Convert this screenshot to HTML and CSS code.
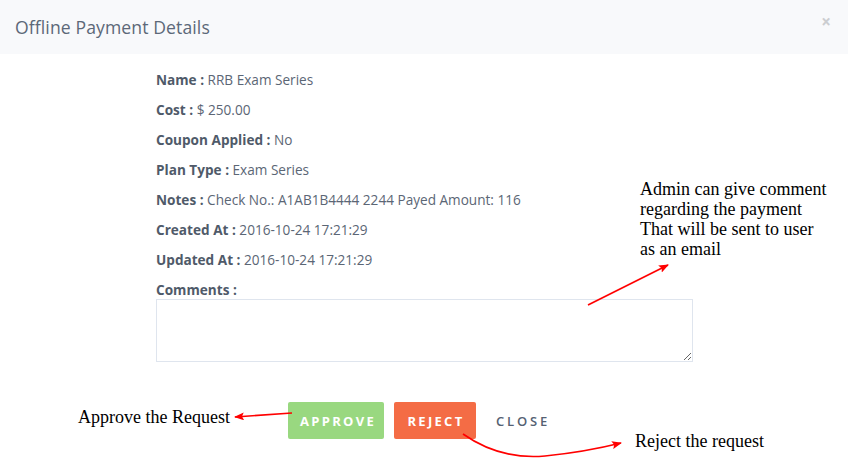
FILE: index.html
```html
<!DOCTYPE html>
<html>
<head>
<meta charset="utf-8">
<link rel="stylesheet" href="styles.css">
</head>
<body>
<div class="modal">
  <div class="modal-header">
    <h4 class="modal-title">Offline Payment Details</h4>
    <span class="close">&times;</span>
  </div>
  <div class="modal-body">
    <div class="details">
      <p class="row"><b>Name :</b> RRB Exam Series</p>
      <p class="row"><b>Cost :</b> $ 250.00</p>
      <p class="row"><b>Coupon Applied :</b> No</p>
      <p class="row"><b>Plan Type :</b> Exam Series</p>
      <p class="row"><b>Notes :</b> Check No.: A1AB1B4444 2244 Payed Amount: 116</p>
      <p class="row"><b>Created At :</b> 2016-10-24 17:21:29</p>
      <p class="row"><b>Updated At :</b> 2016-10-24 17:21:29</p>
      <p class="row"><b>Comments :</b></p>
      <textarea class="comments"></textarea>
    </div>
  </div>
  <div class="modal-footer">
    <button class="btn btn-approve">APPROVE</button>
    <button class="btn btn-reject">REJECT</button>
    <button class="btn btn-close">CLOSE</button>
  </div>

  <div class="note note-admin">Admin can give comment<br>regarding the payment<br>That will be sent to user<br>as an email</div>
  <div class="note note-approve">Approve the Request</div>
  <div class="note note-reject">Reject the request</div>

  <svg class="arrows" width="848" height="473" viewBox="0 0 848 473">
    <defs>
      <marker id="ah" markerWidth="10" markerHeight="8" refX="9" refY="4" orient="auto" markerUnits="userSpaceOnUse">
        <path d="M0,0 L10,4 L0,8 L2,4 Z" fill="#ff0000"/>
      </marker>
    </defs>
    <path d="M588,305 L668,265" stroke="#ff0000" stroke-width="1.6" fill="none" marker-end="url(#ah)"/>
    <path d="M292,413 L235,417" stroke="#ff0000" stroke-width="1.6" fill="none" marker-end="url(#ah)"/>
    <path d="M463,434 Q500,460 545,456 Q585,452 621,443" stroke="#ff0000" stroke-width="1.6" fill="none" marker-end="url(#ah)"/>
  </svg>
</div>
</body>
</html>
```
FILE: styles.css
```css
* { box-sizing: border-box; }
html, body { margin: 0; padding: 0; background: #ffffff; }
body { width: 848px; height: 473px; overflow: hidden; }

.modal {
  position: relative;
  width: 848px;
  height: 473px;
  font-family: "Open Sans", "Noto Sans", sans-serif;
  color: #5b6675;
}

.modal-header {
  height: 54px;
  background: #f8f9fb;
  display: flex;
  align-items: center;
  justify-content: space-between;
  padding: 0 15px 0 15px;
}
.modal-title {
  margin: 0;
  font-size: 17.6px;
  font-weight: 400;
  color: #5c6878;
  letter-spacing: 0.1px;
}
.close {
  font-size: 17px;
  font-weight: 700;
  color: #cbcdd0;
  line-height: 1;
  margin-top: -12px;
  margin-right: 2px;
}

.modal-body {
  padding: 11px 0 0 156px;
}
.details { width: 537px; }
.row {
  margin: 0;
  height: 30px;
  line-height: 30px;
  font-size: 13.6px;
  color: #5b6675;
  white-space: nowrap;
}
.row b { font-weight: 700; color: #4f5a69; }

.comments {
  display: block;
  width: 537px;
  height: 63px;
  margin: -6px 0 0 0;
  border: 1px solid #dfe5ee;
  border-radius: 0;
  resize: vertical;
  background: #fff;
}

.modal-footer {
  display: flex;
  justify-content: center;
  gap: 10px;
  padding: 40px 0 0 2px;
}
.btn {
  height: 37px;
  border: none;
  border-radius: 2px;
  font-family: "Open Sans", "Noto Sans", sans-serif;
  font-size: 13px;
  font-weight: 700;
  letter-spacing: 2.3px;
  padding: 0 10px 0 12px;
  cursor: pointer;
}
.btn-approve { width: 96px; background: #99d880; color: #ffffff; }
.btn-reject { width: 82px; background: #f46c45; color: #ffffff; }
.btn-close { width: 76px; background: transparent; color: #556173; font-weight: 600; letter-spacing: 2.8px; padding-left: 10px; padding-right: 14px; }

.note {
  position: absolute;
  font-family: "Liberation Serif", "Times New Roman", serif;
  font-size: 18px;
  color: #000;
  line-height: 20px;
  white-space: nowrap;
}
.note-admin { left: 640px; top: 179px; }
.note-approve { left: 78px; top: 407px; }
.note-reject { left: 635px; top: 431px; }

.arrows { position: absolute; left: 0; top: 0; pointer-events: none; }
```
